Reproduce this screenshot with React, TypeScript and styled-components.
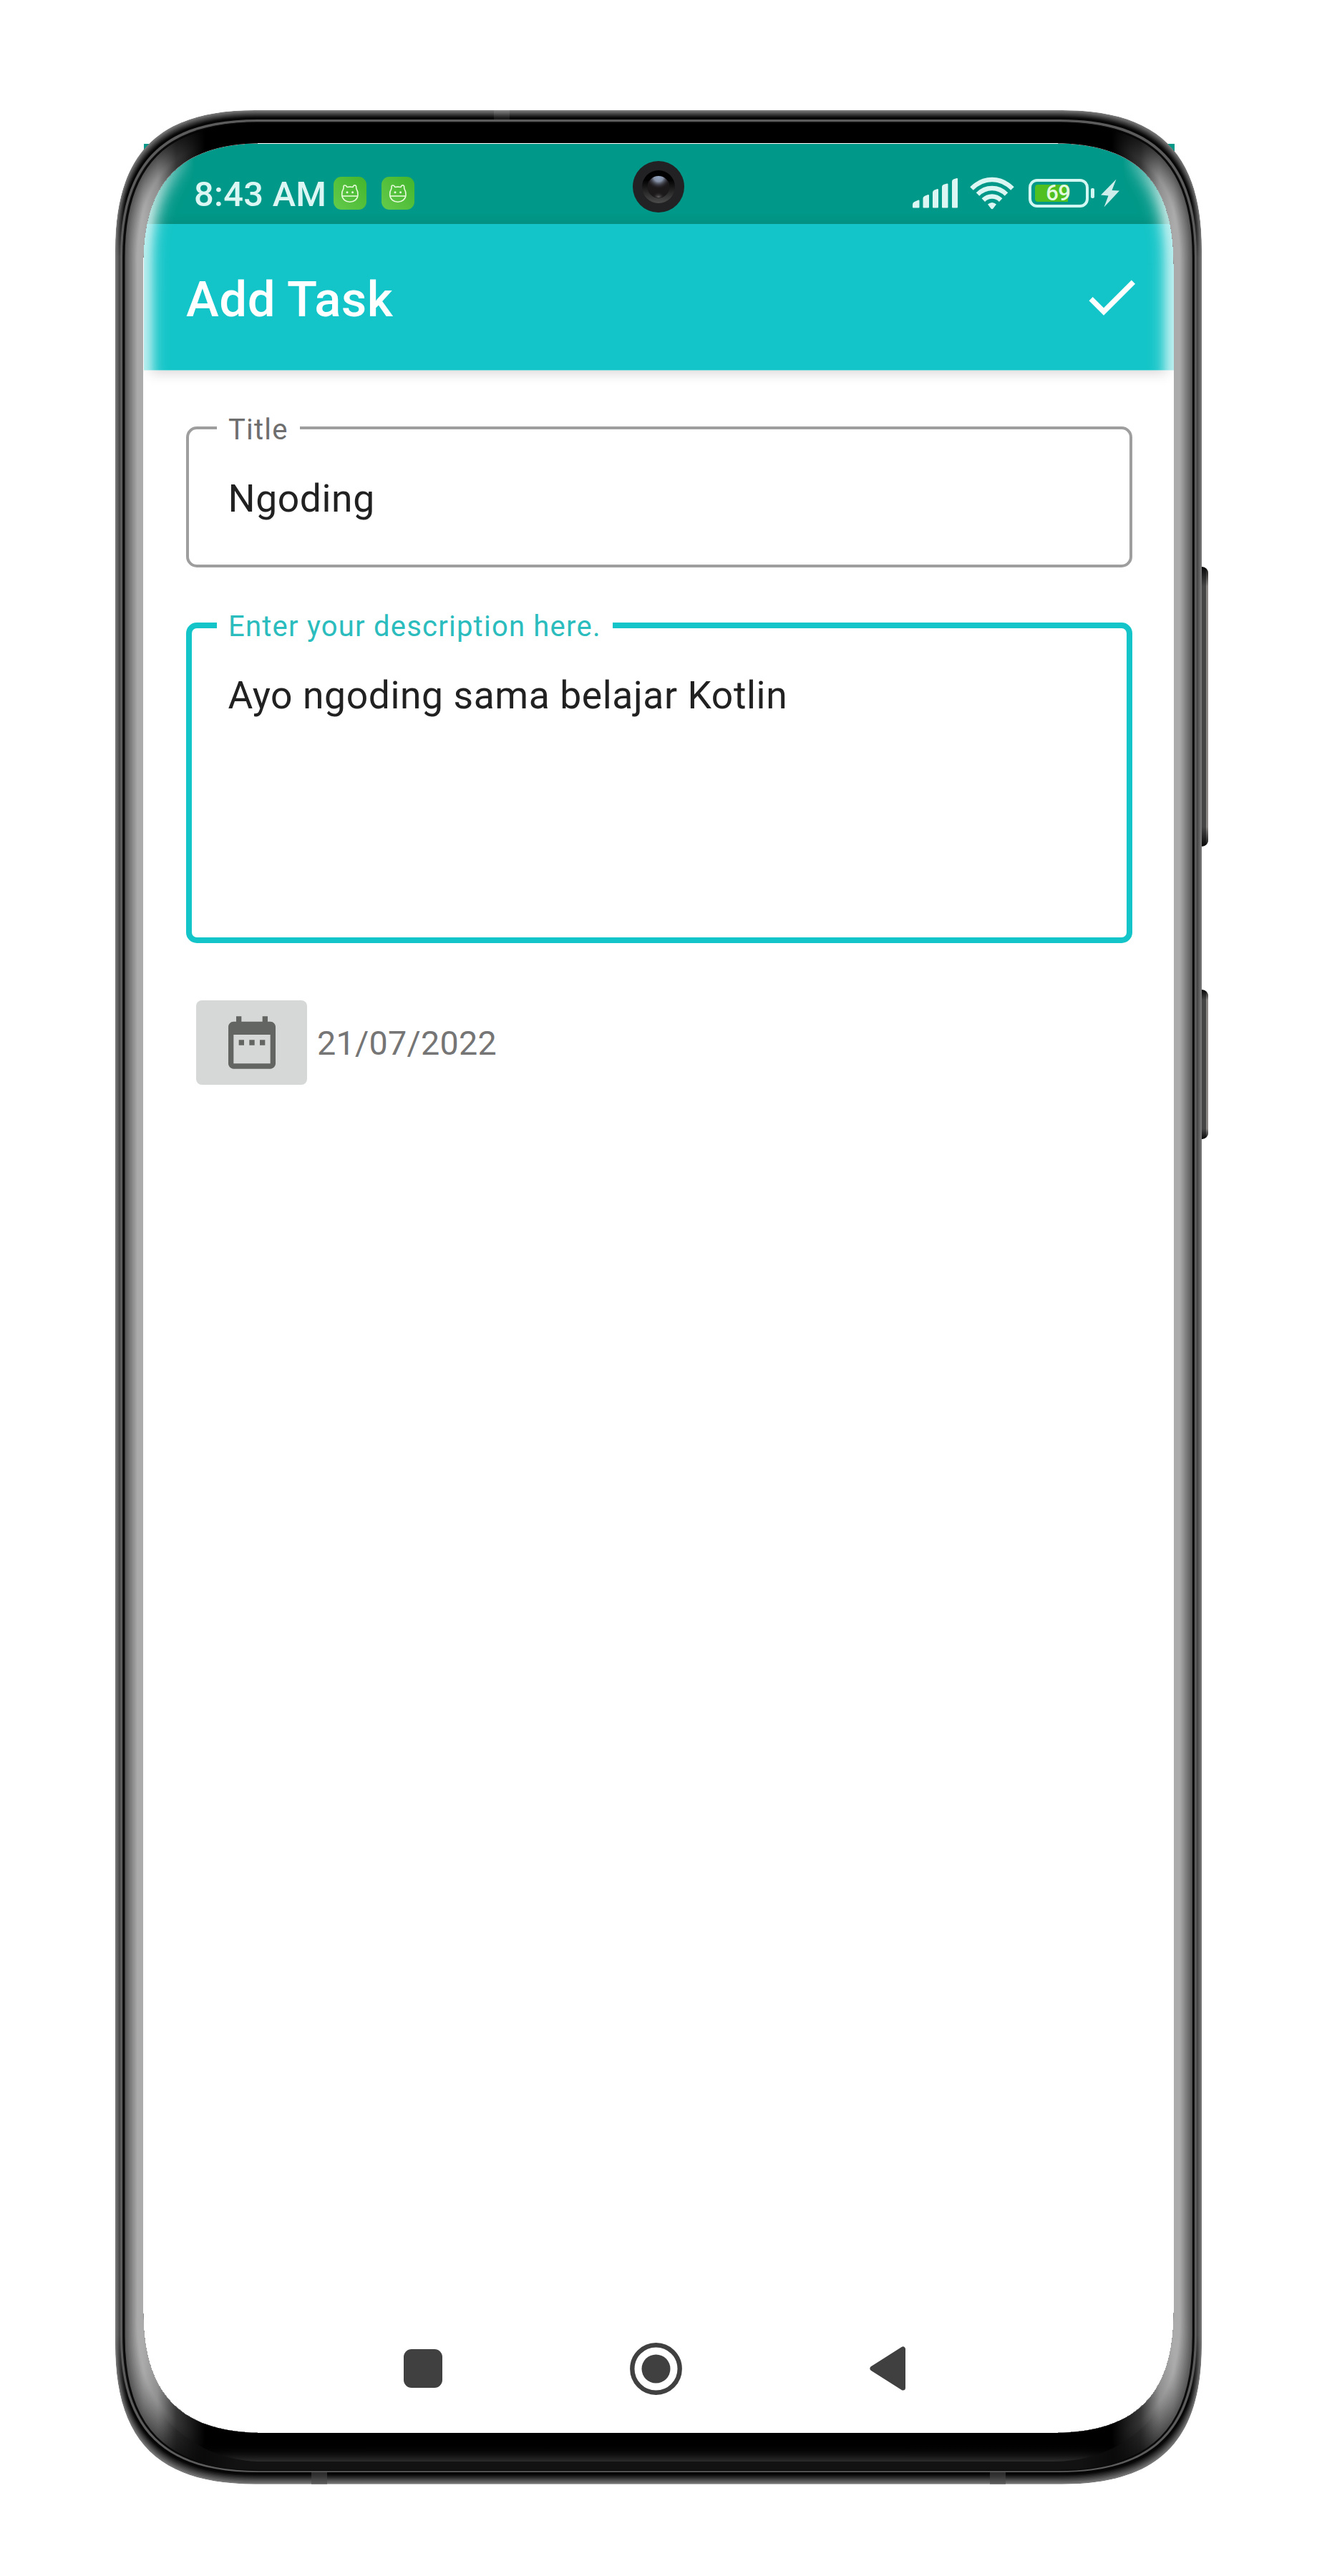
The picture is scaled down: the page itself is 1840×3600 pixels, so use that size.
import React from "react";
import styled, { createGlobalStyle } from "styled-components";

const GlobalStyle = createGlobalStyle`
  html, body { margin: 0; padding: 0; background: #fff; }
  * { box-sizing: border-box; }
`;

const Page = styled.main`
  position: relative;
  width: 1840px;
  height: 3600px;
  padding: 201px 199px 199px 201px;
  background: #fff;
  overflow: hidden;
  font-family: Roboto, "Liberation Sans", sans-serif;
`;

const Screen = styled.section`
  display: flex;
  flex-direction: column;
  width: 1440px;
  height: 3199px;
  background: #fff;
`;

const StatusBar = styled.header`
  display: flex;
  align-items: center;
  justify-content: space-between;
  height: 112px;
  padding: 26px 77px 0 70px;
  background: #009888;
`;

const StatusGroup = styled.div`
  display: flex;
  align-items: center;
`;

const Clock = styled.span`
  width: 195px;
  padding-top: 4px;
  font-size: 48.8px;
  line-height: 56px;
  font-weight: 500;
  letter-spacing: 0.3px;
  color: #dcf6f3;
  white-space: nowrap;
`;

const AppBadge = styled.svg`
  width: 46px;
  height: 46px;
  margin-right: 21px;
`;

const Glyph = styled.svg<{ $gap?: number }>`
  display: block;
  margin-left: ${(p) => p.$gap ?? 0}px;
`;

const Battery = styled.div`
  display: flex;
  align-items: center;
  width: 84px;
  height: 40px;
  margin-left: 20px;
  padding-left: 5px;
  border: 4px solid #d2f7f2;
  border-radius: 12px;
`;

const BatteryLevel = styled.div`
  display: flex;
  justify-content: flex-end;
  align-items: center;
  width: 46px;
  height: 24px;
  border-radius: 4px 0 0 4px;
  background: #4fc01f;
  font-size: 31px;
  line-height: 24px;
  font-weight: 500;
  color: #e2fbe0;
  letter-spacing: -0.8px;
`;

const BatteryText = styled.span`
  margin-right: -3px;
`;

const BatteryTip = styled.div`
  width: 5px;
  height: 14px;
  margin: 0 9px 0 3px;
  border-radius: 2px;
  background: #d2f7f2;
`;

const AppBar = styled.div`
  display: flex;
  align-items: center;
  justify-content: space-between;
  flex: none;
  height: 205px;
  padding: 0 44px 0 59px;
  background: #13c5c8;
  border-bottom: 1px solid #8fdedf;
  box-shadow: 0 3px 16px rgba(60, 40, 40, 0.2);
`;

const AppTitle = styled.h1`
  margin: 0;
  padding-top: 8px;
  font-size: 69px;
  line-height: 80px;
  font-weight: 500;
  letter-spacing: 0.5px;
  color: #fff;
`;

const Form = styled.form`
  display: flex;
  flex-direction: column;
  flex: 1;
  width: 1322px;
  margin-left: 59px;
  padding-top: 59px;
`;

const Field = styled.fieldset<{ $active?: boolean; $height: number }>`
  flex: none;
  min-width: 0;
  height: ${(p) => p.$height}px;
  margin: 0 0 ${(p) => (p.$active ? 80 : 60.5)}px;
  padding: 0 ${(p) => (p.$active ? 52 : 56)}px;
  padding-left: ${(p) => (p.$active ? 35 : 39)}px;
  border: ${(p) => (p.$active ? "8px solid #13c5c8" : "4px solid #9e9e9e")};
  border-radius: 15px;
`;

const FieldLabel = styled.legend<{ $active?: boolean }>`
  height: 41px;
  padding: 0 16px;
  font-size: 40px;
  line-height: ${(p) => (p.$active ? 43 : 47)}px;
  letter-spacing: 1.22px;
  color: ${(p) => (p.$active ? "#2bbcbe" : "#6e6e6e")};
  white-space: nowrap;
`;

const FieldValue = styled.p<{ $active?: boolean }>`
  margin: ${(p) => (p.$active ? 45.5 : 47)}px 0 0 15.5px;
  font-size: 53.4px;
  line-height: 64px;
  letter-spacing: 0.6px;
  color: #212121;
  white-space: nowrap;
`;

const DateRow = styled.div`
  display: flex;
  align-items: center;
  padding-left: 14px;
`;

const DateButton = styled.button`
  display: flex;
  align-items: center;
  justify-content: center;
  width: 155px;
  height: 118px;
  padding: 0;
  border: 0;
  border-radius: 8px;
  background: #d6d8d7;
`;

const DateText = styled.span`
  margin-left: 14px;
  padding-top: 2px;
  font-size: 46.7px;
  line-height: 56px;
  letter-spacing: 0.25px;
  color: #757575;
`;

const NavBar = styled.nav`
  display: flex;
  align-items: center;
  justify-content: space-between;
  width: 702px;
  height: 180px;
  margin-left: 363px;
`;

const FrameArt = styled.svg`
  position: absolute;
  left: 0;
  top: 0;
  pointer-events: none;
`;

/* Rounded outline whose corners ease in over `e` px with handle ratio `k`. */
function outline(l: number, t: number, r: number, b: number, e: number, k: number) {
  const h = e * k;
  return (
    `M${l} ${t + e}C${l} ${t + h} ${l + h} ${t} ${l + e} ${t}` +
    `H${r - e}C${r - h} ${t} ${r} ${t + h} ${r} ${t + e}` +
    `V${b - e}C${r} ${b - h} ${r - h} ${b} ${r - e} ${b}` +
    `H${l + e}C${l + h} ${b} ${l} ${b - h} ${l} ${b - e}Z`
  );
}
const mix = (a: number, b: number, t: number) => a + (b - a) * t;
const gray = (v: number) => {
  const n = Math.round(v);
  return `rgb(${n},${n},${n})`;
};

const OUTER = outline(161, 154, 1679, 3471.7, 195, 0.31);
const INNER = outline(200, 200, 1640, 3400, 170, 0.31);
const GLASS = outline(173.3, 171.7, 1667, 3452, 188, 0.31);

const railSteps = Array.from({ length: 14 }, (_, i) => {
  const t = i / 13;
  return {
    d: outline(mix(161, 168, t), mix(154, 167, t), mix(1679, 1672, t), mix(3471.7, 3455, t), mix(195, 192, t), 0.31),
    side: gray(mix(122, 62, t)),
    end: gray(Math.max(6, 122 - 150 * t)),
  };
});

const bezelSteps = Array.from({ length: 20 }, (_, i) => {
  const t = i / 19;
  return {
    d: outline(mix(173.3, 198, t), mix(171.7, 198, t), mix(1667, 1642, t), mix(3452, 3404, t), mix(188, 171, t), 0.31),
    v: gray(t < 0.7 ? mix(82, 168, t / 0.7) : 171),
  };
});

const glowSteps = Array.from({ length: 27 }, (_, i) => {
  const d = 54 - i * 2;
  return { w: d * 2, v: gray(255 * 0.7 * Math.exp(-((d / 19) ** 2))) };
});

function PhoneFrame() {
  return (
    <FrameArt width="1840" height="3600" viewBox="0 0 1840 3600">
      <defs>
        <clipPath id="ring">
          <path d={OUTER + INNER} clipRule="evenodd" />
        </clipPath>
        <clipPath id="display">
          <path d={INNER} />
        </clipPath>
        {railSteps.map((s, i) => (
          <linearGradient key={i} id={`rail${i}`} gradientUnits="userSpaceOnUse" x1="0" y1="154" x2="0" y2="3471.7">
            <stop offset="0.036" stopColor={s.end} />
            <stop offset="0.062" stopColor={s.side} />
            <stop offset="0.937" stopColor={s.side} />
            <stop offset="0.965" stopColor={s.end} />
          </linearGradient>
        ))}
        <linearGradient id="fade" gradientUnits="userSpaceOnUse" x1="200" y1="0" x2="1640" y2="0">
          <stop offset="0" stopColor="#000" stopOpacity="0" />
          <stop offset="0.014" stopColor="#000" stopOpacity="0.16" />
          <stop offset="0.032" stopColor="#000" stopOpacity="0.68" />
          <stop offset="0.06" stopColor="#000" />
          <stop offset="0.94" stopColor="#000" />
          <stop offset="0.968" stopColor="#000" stopOpacity="0.68" />
          <stop offset="0.986" stopColor="#000" stopOpacity="0.16" />
          <stop offset="1" stopColor="#000" stopOpacity="0" />
        </linearGradient>
        <linearGradient id="lipFade" gradientUnits="userSpaceOnUse" x1="200" y1="0" x2="1640" y2="0">
          <stop offset="0.02" stopColor="#fff" stopOpacity="0" />
          <stop offset="0.09" stopColor="#fff" />
          <stop offset="0.91" stopColor="#fff" />
          <stop offset="0.98" stopColor="#fff" stopOpacity="0" />
        </linearGradient>
        <mask id="lipMask" maskUnits="userSpaceOnUse" x="0" y="3200" width="1840" height="400">
          <rect x="0" y="3200" width="1840" height="400" fill="url(#lipFade)" />
        </mask>
        <linearGradient id="lipGlow" gradientUnits="userSpaceOnUse" x1="0" y1="3416" x2="0" y2="3440">
          <stop offset="0" stopColor="#000" stopOpacity="0" />
          <stop offset="1" stopColor="#2d2d2d" />
        </linearGradient>
        <clipPath id="glass">
          <path d={GLASS} />
        </clipPath>
        <mask id="glow" maskUnits="userSpaceOnUse" x="0" y="0" width="1840" height="3600">
          {glowSteps.map((s) => (
            <path key={s.w} d={INNER} fill="none" stroke={s.v} strokeWidth={s.w} />
          ))}
        </mask>
        <linearGradient id="glowFill" gradientUnits="userSpaceOnUse" x1="200" y1="0" x2="1640" y2="0">
          <stop offset="0.008" stopColor="#fff" />
          <stop offset="0.05" stopColor="#fff" stopOpacity="0" />
          <stop offset="0.95" stopColor="#fff" stopOpacity="0" />
          <stop offset="0.992" stopColor="#fff" />
        </linearGradient>
        <linearGradient id="keyShade" x1="0" y1="0" x2="0" y2="1">
          <stop offset="0" stopColor="#000" stopOpacity="0.9" />
          <stop offset="0.07" stopColor="#000" stopOpacity="0" />
          <stop offset="0.93" stopColor="#000" stopOpacity="0" />
          <stop offset="1" stopColor="#000" stopOpacity="0.9" />
        </linearGradient>
        <linearGradient id="barrel" x1="0" y1="0" x2="0" y2="1">
          <stop offset="0.3" stopColor="#020203" />
          <stop offset="1" stopColor="#4c4c4c" />
        </linearGradient>
        <radialGradient id="lensTop" gradientUnits="userSpaceOnUse" cx="920" cy="247" r="17">
          <stop offset="0" stopColor="#92a6c0" />
          <stop offset="0.4" stopColor="#8490a5" />
          <stop offset="1" stopColor="#1c191b" stopOpacity="0" />
        </radialGradient>
        <radialGradient id="lensBottom" gradientUnits="userSpaceOnUse" cx="920" cy="277" r="9">
          <stop offset="0" stopColor="#858385" />
          <stop offset="1" stopColor="#1c191b" stopOpacity="0" />
        </radialGradient>
      </defs>

      <g clipPath="url(#display)">
        <rect x="200" y="200" width="1440" height="400" fill="url(#glowFill)" mask="url(#glow)" />
        <rect x="350" y="200" width="1130" height="1" fill="#fff" />
      </g>

      {[{ y: 792, h: 391 }, { y: 1383, h: 209 }].map((k) => (
        <g key={k.y}>
          <path d={`M1679 ${k.y}q9 1 9 10v${k.h - 20}q0 9 -9 10z`} fill="#454545" />
          <path d={`M1685 ${k.y + 3}q3 3 3 7v${k.h - 20}q0 4 -3 7z`} fill="#8a8785" />
          <path d={`M1679 ${k.y}q9 1 9 10v${k.h - 20}q0 9 -9 10z`} fill="url(#keyShade)" />
        </g>
      ))}

      <g clipPath="url(#ring)">
        {railSteps.map((s, i) => (
          <path key={i} d={s.d} fill={`url(#rail${i})`} />
        ))}
        <rect x="690" y="154" width="22" height="13" fill="#fff" fillOpacity="0.09" />
        <rect x="435" y="3455" width="22" height="17" fill="#4a4a4a" fillOpacity="0.6" />
        <rect x="1383" y="3455" width="22" height="17" fill="#4a4a4a" fillOpacity="0.6" />
        <path d={outline(168, 167, 1672, 3455, 192, 0.31)} fill="#5c5c5c" />
        <path d={outline(171, 170.3, 1669, 3452.3, 190, 0.31)} fill="#141414" />
        {bezelSteps.map((s, i) => (
          <path key={i} d={s.d} fill={s.v} />
        ))}
        <path d={GLASS} fill="none" stroke="#0a0a0a" strokeWidth="2.4" />
        <path d={outline(174, 171.7, 1666, 3452, 188, 0.31)} fill="url(#fade)" />
        <g clipPath="url(#glass)">
          <g mask="url(#lipMask)">
            <rect x="170" y="3416" width="1500" height="24" fill="url(#lipGlow)" />
            <path
              d="M170 3100H1670V3460H170ZM173 3245C173 3300 226 3440 368 3440H1472C1614 3440 1667 3300 1667 3245Z"
              fillRule="evenodd"
              fill="#121212"
            />
          </g>
        </g>
      </g>

      <circle cx="920" cy="261" r="36" fill="#222224" />
      <circle cx="920" cy="261" r="23" fill="url(#barrel)" />
      <circle cx="920" cy="261" r="15.5" fill="#1c191b" />
      <circle cx="920" cy="261" r="15" fill="url(#lensTop)" />
      <circle cx="920" cy="261" r="15" fill="url(#lensBottom)" />
    </FrameArt>
  );
}

function CritterBadge() {
  return (
    <AppBadge viewBox="0 0 46 46">
      <defs>
        <linearGradient id="leaf" x1="1" y1="0" x2="0" y2="1">
          <stop offset="0" stopColor="#43b52c" />
          <stop offset="1" stopColor="#64cb4b" />
        </linearGradient>
      </defs>
      <rect width="46" height="46" rx="11" fill="url(#leaf)" />
      <g fill="none" stroke="#e6fbd9" strokeWidth="1.6" strokeLinejoin="round">
        <path d="M13.500 17.500Q14.300 16 14 13.800Q14.200 11.800 16 12T18.800 14.500Q23 13.700 27 14.500Q27.800 12 29.600 11.900T31.700 13.800Q31.300 16 32.200 17.500Q34.200 20.500 34 25.500C33.600 31.500 28.800 35.300 22.800 35.300S12.200 31.500 11.700 25.500Q11.400 20.500 13.500 17.500Z" />
        <path d="M11.700 27H34" />
      </g>
      <circle cx="19" cy="21.800" r="1.5" fill="#e6fbd9" />
      <circle cx="26.600" cy="21.800" r="1.5" fill="#e6fbd9" />
    </AppBadge>
  );
}

function SignalIcon() {
  const c = "#dcf6f3";
  return (
    <Glyph width="64" height="42" viewBox="0 0 64 42">
      <path fill={c} stroke={c} strokeWidth="2" strokeLinejoin="round"
        d="M1 40.500V37Q1 35 3 34L8.500 31.500V40.500ZM15.500 40.500V28Q15.500 27 17 26L22 24V40.500ZM29 40.500V20Q29 18.500 31 17.500L35 16V40.500ZM42 40.500V12Q42 10.500 44 9.800L48.500 8.500V40.500ZM56 40.500V4.500Q56 3 58 2.200L62 1V40.500Z" />
    </Glyph>
  );
}

function WifiIcon() {
  return (
    <Glyph $gap={16} width="62" height="46" viewBox="0 0 62 46">
      <g fill="none" stroke="#dcf6f3" strokeWidth="6.400">
        <path d="M2.500 16.500Q15 4 31 4T59.500 16.500" />
        <path d="M11 24.500Q19.500 16 31 16T51 24.500" />
        <path d="M18.800 32.600Q24 27.500 31 27.500T43.200 32.600" />
      </g>
      <path d="M25 38.500Q31 33.500 37 38.500L32.500 44.500Q31 46 29.500 44.500Z" fill="#dcf6f3" />
    </Glyph>
  );
}

export default function App() {
  return (
    <>
      <GlobalStyle />
      <Page>
        <Screen>
          <StatusBar>
            <StatusGroup>
              <Clock>8:43 AM</Clock>
              <CritterBadge />
              <CritterBadge />
            </StatusGroup>
            <StatusGroup>
              <SignalIcon />
              <WifiIcon />
              <Battery>
                <BatteryLevel>
                  <BatteryText>69</BatteryText>
                </BatteryLevel>
              </Battery>
              <BatteryTip />
              <Glyph width="26" height="40" viewBox="0 0 26 40">
                <path d="M21.500 0.500 0 22.500 10.500 23.500 4.500 39.500 26 16.500 15.500 16Z" fill="#cfeeeb" />
              </Glyph>
            </StatusGroup>
          </StatusBar>

          <AppBar>
            <AppTitle>Add Task</AppTitle>
            <Glyph width="88" height="88" viewBox="0 0 24 24">
              <path d="M9 16.170 4.830 12l-1.420 1.410L9 19 21 7l-1.410-1.410z" fill="#fff" />
            </Glyph>
          </AppBar>

          <Form>
            <Field $height={216}>
              <FieldLabel>Title</FieldLabel>
              <FieldValue>Ngoding</FieldValue>
            </Field>
            <Field $active $height={464.5}>
              <FieldLabel $active>Enter your description here.</FieldLabel>
              <FieldValue $active>Ayo ngoding sama belajar Kotlin</FieldValue>
            </Field>
            <DateRow>
              <DateButton type="button">
                <Glyph width="88" height="88" viewBox="0 0 24 24">
                  <path
                    fill="#636563"
                    d="M9 11H7v2h2v-2zm4 0h-2v2h2v-2zm4 0h-2v2h2v-2zm2-7h-1V2h-2v2H8V2H6v2H5c-1.110 0-1.990.9-1.990 2L3 20c0 1.100.89 2 2 2h14c1.100 0 2-.9 2-2V6c0-1.100-.9-2-2-2zm0 16H5V9h14v11z"
                  />
                </Glyph>
              </DateButton>
              <DateText>21/07/2022</DateText>
            </DateRow>
          </Form>

          <NavBar>
            <Glyph width="54" height="54" viewBox="0 0 54 54">
              <rect width="54" height="54" rx="11" fill="#404040" />
            </Glyph>
            <Glyph width="73" height="73" viewBox="0 0 73 73">
              <circle cx="36.500" cy="36.500" r="33.200" fill="none" stroke="#404040" strokeWidth="6.400" />
              <circle cx="36.500" cy="36.500" r="20" fill="#404040" />
            </Glyph>
            <Glyph width="51" height="62" viewBox="0 0 51 62">
              <path d="M4 31 46.500 4V58Z" fill="#404040" stroke="#404040" strokeWidth="7" strokeLinejoin="round" />
            </Glyph>
          </NavBar>
        </Screen>
        <PhoneFrame />
      </Page>
    </>
  );
}
